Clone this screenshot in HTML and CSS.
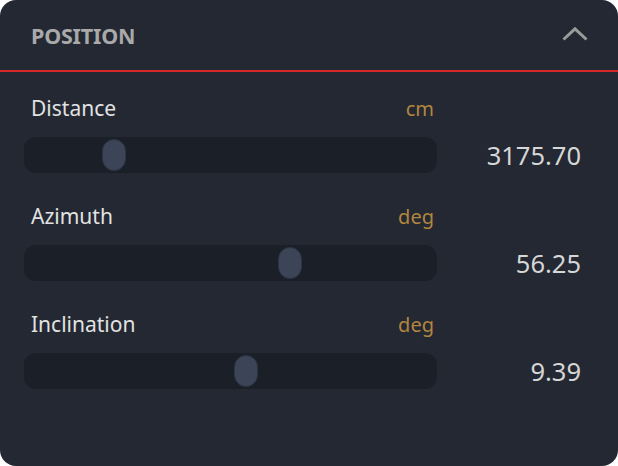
FILE: index.html
```html
<!DOCTYPE html>
<html>
<head>
<meta charset="utf-8">
<link rel="stylesheet" href="styles.css">
</head>
<body>
<div class="panel">
  <div class="header">
    <span class="title">POSITION</span>
    <svg class="chevron" width="26" height="14" viewBox="0 0 26 14"><polyline points="1.5,12.5 13,1.8 24.5,12.5" fill="none" stroke="#9a9a9a" stroke-width="3"/></svg>
  </div>
  <div class="content">
    <div class="row">
      <div class="labels"><span class="label">Distance</span><span class="unit">cm</span></div>
      <div class="value-spacer"></div>
      <div class="track"><div class="thumb" style="left:78px"></div></div>
      <div class="value">3175.70</div>
    </div>
    <div class="row">
      <div class="labels"><span class="label">Azimuth</span><span class="unit">deg</span></div>
      <div class="value-spacer"></div>
      <div class="track"><div class="thumb" style="left:254px"></div></div>
      <div class="value">56.25</div>
    </div>
    <div class="row">
      <div class="labels"><span class="label">Inclination</span><span class="unit">deg</span></div>
      <div class="value-spacer"></div>
      <div class="track"><div class="thumb" style="left:210px"></div></div>
      <div class="value">9.39</div>
    </div>
  </div>
</div>
</body>
</html>
```
FILE: styles.css
```css
html, body {
  margin: 0;
  padding: 0;
  background: #ffffff;
}
.panel {
  width: 618px;
  height: 466px;
  background: #232833;
  border-radius: 16px;
  overflow: hidden;
  font-family: "Noto Sans", "Open Sans", sans-serif;
}
.header {
  height: 70px;
  border-bottom: 2px solid #d62828;
  display: flex;
  align-items: center;
  justify-content: space-between;
  padding: 0 30px 0 31px;
}
.title {
  color: #a9a9a9;
  font-size: 21.5px;
  font-weight: 700;
  line-height: 30px;
  letter-spacing: -0.2px;
  margin-top: 2px;
}
.chevron {
  display: block;
  margin-top: -2px;
}
.content {
  padding: 21px 37px 0 24px;
}
.row {
  display: grid;
  grid-template-columns: 413px 1fr;
  grid-template-rows: 30px 36px;
  row-gap: 14px;
  align-items: center;
  margin-bottom: 28px;
}
.labels {
  display: flex;
  justify-content: space-between;
  align-items: baseline;
  height: 30px;
  padding: 0 3px 0 7px;
  line-height: 30px;
}
.label {
  color: #e2e2e2;
  font-size: 21px;
}
.unit {
  color: #b2853f;
  font-size: 20px;
}
.track {
  position: relative;
  height: 36px;
  background: #1b1f27;
  border-radius: 12px;
}
.thumb {
  position: absolute;
  top: 2px;
  width: 22px;
  height: 30px;
  background: #3b4557;
  border: 1px solid #2d3442;
  border-radius: 12px;
}
.value {
  text-align: right;
  color: #d6d6d6;
  font-size: 25.5px;
  line-height: 36px;
}
```
